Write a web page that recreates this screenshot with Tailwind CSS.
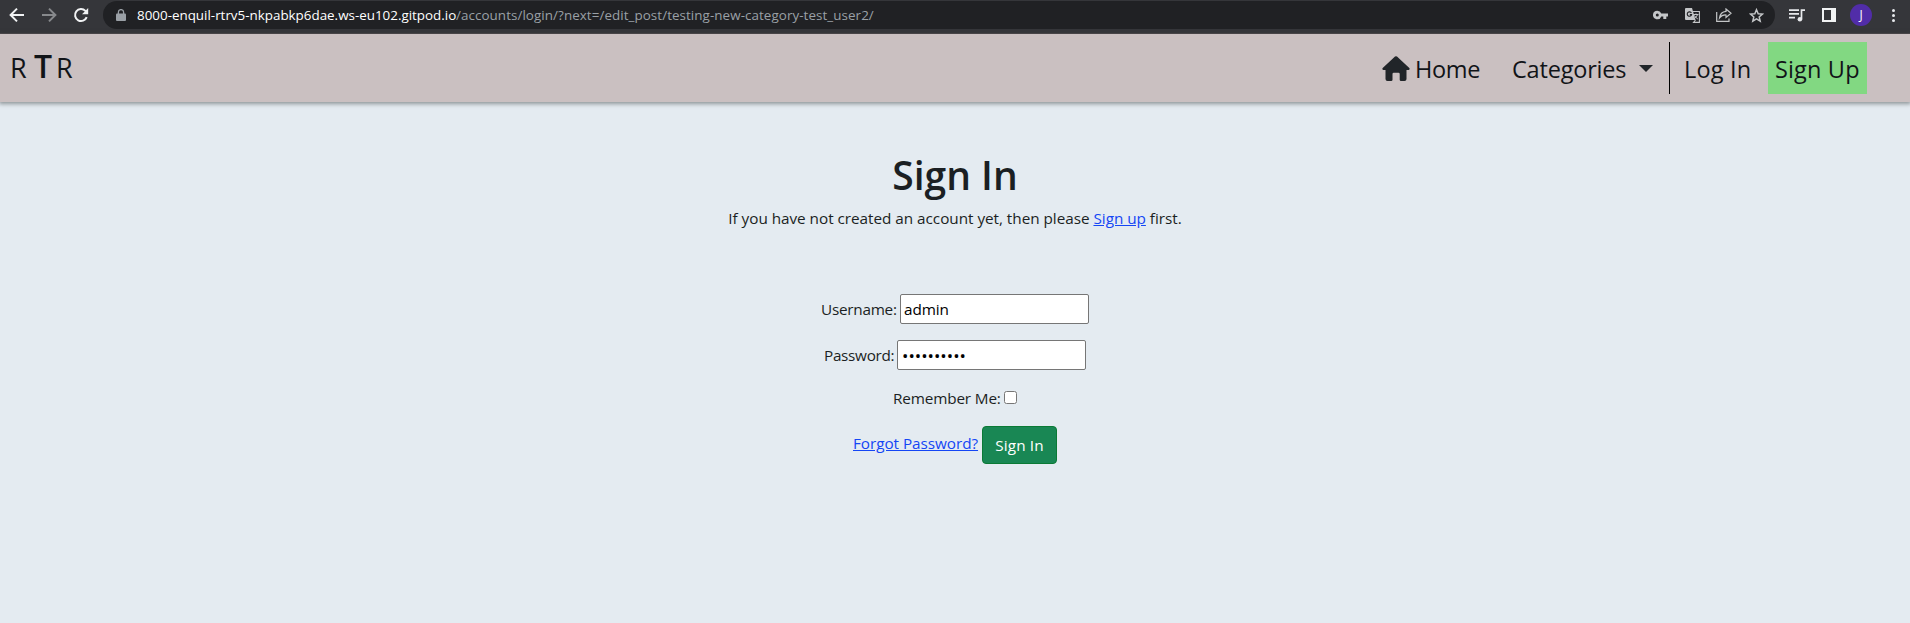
<!DOCTYPE html>
<html lang="en">
<head>
<meta charset="utf-8">
<title>Sign In</title>
<script src="https://cdn.jsdelivr.net/npm/@tailwindcss/browser@4"></script>
</head>
<body class="h-[623px] overflow-hidden bg-[#e4ebf1] font-['Open_Sans',sans-serif] text-[15.3px] leading-6 text-[#1b1f23]">

<!-- Browser toolbar -->
<div class="flex h-[34px] items-start border-b border-[#4b464a] bg-[#35363a]">
  <div class="flex h-[30px] w-[103px] shrink-0 items-center pl-[9px]">
    <svg class="size-4" viewBox="0 0 16 16" fill="none" stroke="#f1f3f4" stroke-width="2"><path d="M15 8H2M8 1.6 1.6 8 8 14.4"/></svg>
    <svg class="ml-4 size-4" viewBox="0 0 16 16" fill="none" stroke="#87898c" stroke-width="2"><path d="M1 8h13M8 1.6 14.4 8 8 14.4"/></svg>
    <svg class="ml-4 size-4" viewBox="0 0 16 16" fill="none" stroke="#f1f3f4" stroke-width="2"><path d="M13.7 10.1A6 6 0 1 1 12.4 3.9l1 1"/><path d="M15.2 1v6.2H9z" fill="#f1f3f4" stroke="none"/></svg>
  </div>
  <div class="mt-px flex h-7 w-[1672px] shrink-0 items-center rounded-full bg-[#202124] pl-[13px]">
    <svg class="h-3 w-[10px]" viewBox="0 0 10 12"><path d="M1 4.5h8q1 0 1 1V11q0 1-1 1H1q-1 0-1-1V5.500q0-1 1-1z" fill="#9aa0a6"/><path d="M2.400 5V3a2.600 2.400 0 0 1 5.200 0v2" fill="none" stroke="#9aa0a6" stroke-width="1.300"/></svg>
    <div class="ml-[11px] flex text-[13.4px] leading-7 whitespace-nowrap"><span class="w-[319px] text-white">8000-enquil-rtrv5-nkpabkp6dae.ws-eu102.gitpod.io</span><span class="tracking-[0.07px] text-[#9aa0a6]">/accounts/login/?next=/edit_post/testing-new-category-test_user2/</span></div>
    <div class="mr-[11px] ml-auto flex items-center">
      <svg class="mr-[17px] h-[10px] w-[15px]" viewBox="0 0 15 10" fill="#c4c6c8"><path fill-rule="evenodd" d="M4.300.7a4.300 4.300 0 1 0 4 5.800h2V9h3V6.500H15v-3H8.300A4.300 4.300 0 0 0 4.300.7zm0 2.800a1.500 1.500 0 1 1 0 3 1.500 1.500 0 0 1 0-3z"/></svg>
      <svg class="mr-4 size-[15px]" viewBox="0 0 15 15"><path d="M1 0h6l3.500 12H1q-1 0-1-1V1q0-1 1-1z" fill="#c4c6c8"/><path d="M7.500 3.500H14.400V14.400H8.500l2-2.400" fill="none" stroke="#c4c6c8" stroke-width="1.100"/><path d="M6.400 5A2.200 2.200 0 1 0 6.600 6.600H4.800" fill="none" stroke="#202124" stroke-width="1.100"/><path d="M8.500 6.500h5M11 5.500v1M12.500 6.500q-.5 2.500-3 4M9.500 7.500q1 2 3.300 3.500" fill="none" stroke="#c4c6c8"/></svg>
      <svg class="mr-[17px] h-[14px] w-4" viewBox="0 0 16 14" fill="none" stroke="#c4c6c8" stroke-width="1.200"><path d="M.7 4v9.300H13V10.500"/><path d="M10 1l5 4.200-5 4.200V7Q6 6.700 3.500 10 4.300 4 10 3.400z"/></svg>
      <svg class="size-[15px]" viewBox="0 0 15 15" fill="none" stroke="#c4c6c8" stroke-width="1.500"><path d="M7.500 1.700l1.700 4 4.300.4-3.300 2.800 1 4.200-3.700-2.200-3.700 2.200 1-4.200L1.500 6.100l4.300-.4z"/></svg>
    </div>
  </div>
  <div class="flex h-[30px] items-center">
    <svg class="ml-[14px] h-[13px] w-4" viewBox="0 0 16 13" fill="none" stroke="#e8eaed" stroke-width="1.700"><path d="M0 1.200h10M0 4.900h10M0 8.600h6M12.500 10V1.200H16"/><circle cx="10.900" cy="10.200" r="2.300" fill="#e8eaed" stroke="none"/></svg>
    <svg class="ml-[17px] h-[14px] w-[14px]" viewBox="0 0 14 14"><path fill="#f1f3f4" fill-rule="evenodd" d="M0 0h14v14H0zM2 2v10h7V2z"/></svg>
    <span class="ml-[14px] flex size-[22px] items-center justify-center rounded-full bg-[#512da8] text-[12px] text-white">J</span>
    <svg class="ml-5 h-[13px] w-[3px]" viewBox="0 0 3 13" fill="#e8eaed"><circle cx="1.500" cy="1.500" r="1.500"/><circle cx="1.500" cy="6.500" r="1.500"/><circle cx="1.500" cy="11.500" r="1.500"/></svg>
  </div>
</div>

<!-- Site navigation -->
<nav class="flex h-[68px] items-start bg-[#cac0c1] pt-2 text-[23.5px] leading-[54px] whitespace-nowrap text-[#111418] shadow-[0_1px_4px_1px_rgba(60,65,65,0.5)]">
  <a class="-mt-[3px] flex items-baseline pl-[10px] text-[27px]"><span class="w-[24px]">R</span><span class="w-[22px] text-[32px] font-semibold">T</span><span>R</span></a>
  <div class="ml-auto flex h-[52px] pr-[43px]">
    <svg class="mt-[14px] h-[26px] w-[28px]" viewBox="0 0 28 26" fill="#212529"><path d="M13 .6q1-.8 2 0L27.300 12q1 1.500-.6 2H24.500V23q0 2-2 2H19q-1.300 0-1.300-1.300V18q0-1.200-1.200-1.200h-4.800q-1.200 0-1.200 1.200v5.700Q10.500 25 9.200 25H5.500q-2 0-2-2V14H1.300q-1.600-.5-.6-2z"/></svg>
    <a class="ml-[5px] w-[97px] tracking-[-0.3px]">Home</a>
    <a class="w-[120px] tracking-[-0.2px]">Categories</a>
    <span class="mt-[23px] ml-[7px] h-0 border-x-[7px] border-t-[7px] border-x-transparent border-t-[#212529]"></span>
    <span class="ml-4 w-px bg-black"></span>
    <a class="ml-[14px] w-[84px] tracking-[0.2px]">Log In</a>
    <a class="w-[99px] bg-[#82d882] pl-[7px] tracking-[0.15px]">Sign Up</a>
  </div>
</nav>

<!-- Sign-in form -->
<main class="flex flex-col items-center pt-[49px] whitespace-nowrap">
  <h1 class="h-12 text-[39px] leading-[48px] font-semibold">Sign In</h1>
  <p class="mt-[7px] tracking-[-0.03px]">If you have not created an account yet, then please <a href="#" class="text-[#1446f5] underline">Sign up</a> first.</p>
  <form class="mt-16 flex flex-col">
    <div class="flex h-[30px] items-center justify-center">
      <label class="w-[79px] tracking-[-0.25px]">Username:</label>
      <input type="text" value="admin" class="h-[30px] w-[189px] rounded-[2px] border border-[#767676] bg-white px-[3px] tracking-[-0.1px] text-black outline-none">
    </div>
    <div class="mt-4 flex h-[30px] items-center justify-center">
      <label class="w-[73px] tracking-[-0.3px]">Password:</label>
      <input type="password" value="0123456789" class="h-[30px] w-[189px] rounded-[2px] border border-[#767676] bg-white px-[4px] text-[17px] text-black outline-none">
    </div>
    <div class="mt-4 flex h-6 items-center justify-center">
      <label class="w-[111px] tracking-[-0.15px]">Remember Me:</label>
      <input type="checkbox" class="-mt-[2px] size-[13px]">
    </div>
    <div class="mt-4 flex h-[38px] justify-center">
      <a href="#" class="mt-[5px] w-[129px] tracking-[-0.05px] text-[#1446f5]"><span class="underline">Forgot Password?</span></a>
      <button type="button" class="h-[38px] w-[75px] rounded-[4px] border border-[#0b7a35] bg-[#198754] tracking-[0.1px] text-white">Sign In</button>
    </div>
  </form>
</main>
</body>
</html>
